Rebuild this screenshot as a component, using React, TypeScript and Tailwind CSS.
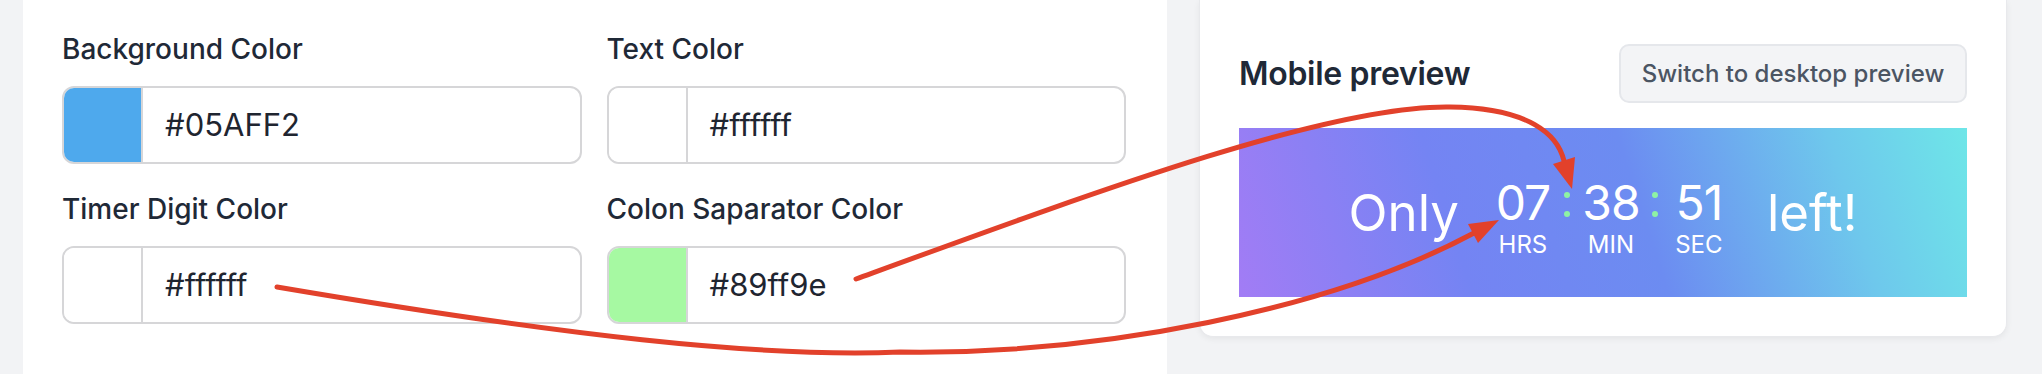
const fields = [
  { label: 'Background Color', value: '#05AFF2', swatch: 'bg-[#4ea9ed]' },
  { label: 'Text Color', value: '#ffffff', swatch: 'bg-white' },
  { label: 'Timer Digit Color', value: '#ffffff', swatch: 'bg-white' },
  { label: 'Colon Saparator Color', value: '#89ff9e', swatch: 'bg-[#a6f9a2]' },
];

const units = [
  { value: '07', label: 'HRS' },
  { value: '38', label: 'MIN' },
  { value: '51', label: 'SEC' },
];

function ColorField({ label, value, swatch }: { label: string; value: string; swatch: string }) {
  return (
    <div className="flex flex-col gap-[17px]">
      <label className="text-[28px] font-medium leading-[40px] text-[#1f2937]">{label}</label>
      <div className="flex h-[78px] overflow-hidden rounded-[12px] border-2 border-[#d6d6d8] bg-white">
        <div className={`w-[79px] shrink-0 border-r-2 border-[#d6d6d8] ${swatch}`} />
        <div className="flex items-center pl-[22px] text-[31px] text-[#1f2530]">{value}</div>
      </div>
    </div>
  );
}

function Colon() {
  return (
    <div className="flex h-[48px] w-[28px] flex-col items-center justify-center gap-[13px] pt-[4px]">
      <span className="h-[6px] w-[6px] rounded-full bg-[#8ef2a4]" />
      <span className="h-[6px] w-[6px] rounded-full bg-[#8ef2a4]" />
    </div>
  );
}

function Banner() {
  return (
    <div className="mt-[25px] flex h-[169px] items-center justify-center gap-[34px] bg-[linear-gradient(72deg,#a27cf5_0%,#7484f3_30%,#6c8cf1_55%,#6ec8ec_82%,#6ee6e8_100%)] font-normal text-white">
      <span className="text-[51px] leading-none">Only</span>
      <div className="mt-[10px] flex items-start">
        {units.map((u, i) => (
          <div key={u.label} className="flex items-start">
            {i > 0 && <Colon />}
            <div className="flex w-[60px] flex-col items-center gap-[6px]">
              <span className="text-[48px] leading-none tracking-[-1px]">{u.value}</span>
              <span className="text-[24px] leading-none">{u.label}</span>
            </div>
          </div>
        ))}
      </div>
      <span className="ml-[4px] text-[51px] leading-none">left!</span>
    </div>
  );
}

export default function App() {
  return (
    <div className="relative h-[374px] w-[2042px] overflow-hidden bg-[#f2f3f5] font-['Inter','Noto_Sans',sans-serif]">
      <div className="flex h-full gap-[32px] pl-[23px]">
        <div className="h-full w-[1144px] bg-white pl-[39px] pr-[41px] pt-[29px]">
          <div className="grid grid-cols-2 gap-x-[25px] gap-y-[25px]">
            {fields.map((f) => (
              <ColorField key={f.label} {...f} />
            ))}
          </div>
        </div>

        <div className="w-[808px] self-start rounded-b-[14px] border-x border-b border-[#e8e9ec] bg-white px-[39px] pb-[39px] pt-[44px] shadow-[0_2px_6px_rgba(0,0,0,0.06)]">
          <div className="flex items-center justify-between">
            <h2 className="text-[32px] font-semibold leading-[48px] tracking-[-0.3px] text-[#1f2937]">Mobile preview</h2>
            <button className="h-[59px] w-[348px] rounded-[10px] border-2 border-[#e5e7eb] bg-[#f3f4f6] text-[24px] font-medium text-[#4b5563]">
              Switch to desktop preview
            </button>
          </div>
          <Banner />
        </div>
      </div>

      {/* red annotation arrows */}
      <svg className="pointer-events-none absolute inset-0" width="2042" height="374" viewBox="0 0 2042 374">
        <g fill="none" stroke="#e2412b" strokeWidth="5" strokeLinecap="round">
          <path d="M277 287 C560 335 760 358 900 352 C1100 355 1330 310 1474 233" />
          <path d="M856 279 C1100 190 1330 105 1450 107 C1530 108 1558 135 1564 161" />
        </g>
        <g fill="#e2412b">
          <polygon points="1499,220 1478,243 1468,224" />
          <polygon points="1572,189 1575,157 1553,164" />
        </g>
      </svg>
    </div>
  );
}
